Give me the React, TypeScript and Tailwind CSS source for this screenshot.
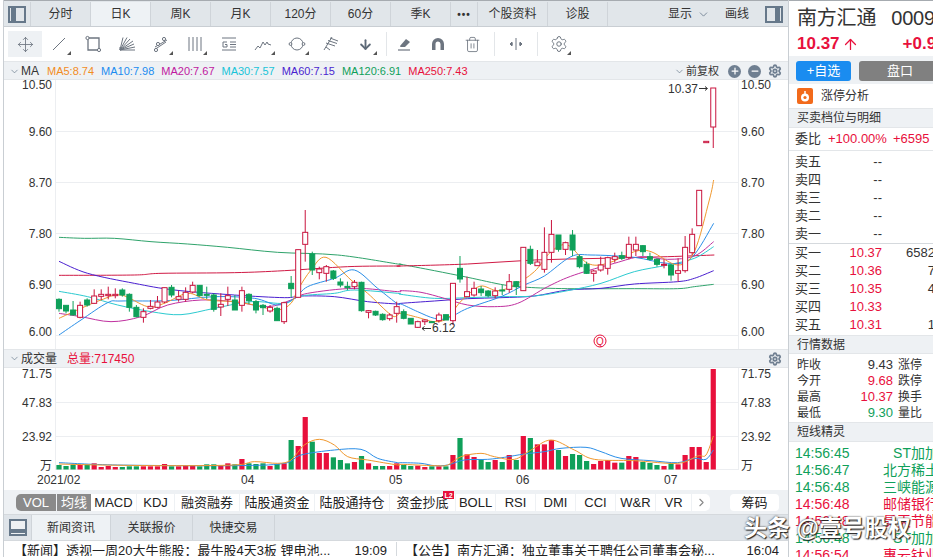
import { Move, Trash2, Settings, ChevronDown, ChevronRight, Plus, Minus, ArrowUp, ArrowDown } from 'lucide-react'
import type { ReactNode } from 'react'

const GREEN = '#0fa05a'
const RED = '#e8103c'
const CANDLE_RED = '#c9153f'

// hi, top, bottom, lo, up, volume top
type Candle = [number, number, number, number, number, number]

const candles: Candle[] = [
  [295, 298, 326, 335, 0, 345], [316, 316, 333, 340, 0, 348], [303, 330, 345, 345, 0, 344], [305, 316, 352, 355, 1, 345],
  [295, 300, 315, 320, 0, 344], [268, 288, 310, 312, 1, 340], [268, 283, 289, 300, 1, 351], [260, 283, 287, 298, 1, 348],
  [265, 283, 287, 295, 1, 351], [265, 270, 285, 290, 0, 351], [280, 283, 322, 335, 0, 349], [315, 322, 350, 352, 0, 349],
  [325, 335, 352, 368, 1, 349], [300, 319, 325, 328, 1, 349], [288, 306, 322, 325, 1, 349], [263, 263, 306, 310, 1, 342],
  [255, 262, 285, 292, 0, 349], [272, 290, 298, 305, 1, 349], [262, 277, 298, 305, 1, 347], [245, 256, 276, 280, 1, 347],
  [255, 256, 287, 290, 0, 349], [260, 283, 285, 297, 0, 343], [280, 285, 328, 335, 0, 343], [280, 313, 321, 348, 1, 347],
  [260, 287, 298, 318, 1, 340], [285, 300, 330, 330, 0, 343], [260, 272, 316, 335, 1, 327], [280, 283, 302, 312, 0, 340],
  [300, 305, 330, 340, 0, 342], [312, 316, 323, 345, 0, 340], [315, 322, 333, 338, 1, 348], [320, 325, 362, 363, 0, 342],
  [305, 308, 365, 372, 1, 340], [228, 250, 266, 292, 0, 270], [149, 149, 292, 292, 1, 288], [30, 97, 133, 185, 1, 201],
  [155, 162, 210, 225, 0, 275], [200, 207, 218, 238, 1, 309], [195, 200, 220, 245, 1, 309], [210, 213, 235, 240, 0, 322],
  [235, 246, 255, 262, 0, 330], [245, 259, 263, 270, 0, 340], [240, 247, 260, 268, 1, 336], [245, 247, 332, 335, 0, 318],
  [330, 332, 337, 355, 1, 340], [332, 334, 345, 348, 0, 348], [340, 343, 359, 362, 0, 348], [340, 345, 356, 362, 1, 348],
  [305, 320, 340, 368, 1, 340],
  [328, 335, 355, 358, 0, 345], [355, 355, 372, 372, 0, 348], [362, 365, 382, 384, 1, 347], [358, 360, 365, 375, 1, 351],
  [364, 365, 368, 368, 0, 349], [338, 345, 362, 368, 1, 349], [344, 344, 360, 360, 0, 349], [250, 250, 362, 375, 1, 315],
  [168, 205, 237, 248, 0, 264], [230, 275, 290, 292, 1, 313], [245, 265, 285, 290, 1, 321], [258, 267, 278, 288, 0, 328],
  [270, 273, 287, 292, 0, 336], [262, 273, 287, 295, 1, 330], [255, 270, 272, 285, 0, 336], [222, 245, 268, 278, 1, 315],
  [243, 245, 260, 285, 0, 330], [142, 142, 272, 272, 1, 258], [137, 148, 190, 195, 0, 264], [150, 186, 197, 197, 1, 283],
  [82, 157, 208, 218, 1, 283], [60, 103, 157, 188, 1, 270], [105, 105, 148, 155, 0, 300], [125, 128, 148, 165, 1, 318],
  [90, 105, 150, 168, 0, 312], [165, 170, 200, 205, 0, 315], [185, 193, 220, 222, 0, 333], [210, 213, 220, 245, 1, 342],
  [170, 195, 210, 215, 1, 333], [170, 173, 205, 224, 1, 330], [158, 170, 178, 188, 1, 338], [155, 167, 175, 180, 0, 338],
  [110, 133, 172, 178, 1, 318], [110, 133, 150, 168, 1, 321], [135, 137, 155, 168, 0, 336], [158, 170, 178, 182, 0, 339],
  [175, 178, 193, 200, 0, 345], [178, 193, 195, 205, 1, 348], [192, 195, 225, 242, 0, 340], [175, 212, 220, 245, 1, 343],
  [108, 142, 212, 218, 1, 315], [85, 103, 158, 165, 1, 291], [-29, -29, 77, 77, 1, 291], [-176, -176, -172, -172, 1, 336],
  [-336, -336, -219, -156, 1, 57],
]

const candleX = (i: number) => 58 + i * 7.035
const py = (v: number) => 200 + v / 3
const vy = (v: number) => 350 + v / 3

// catmull-rom through the sampled points, so the averages don't look kinked
const toPath = (left: number[][], right: number[][], fy: (v: number) => number) => {
  const pts = [...left.map(([x, y]) => [x / 3, fy(y)]), ...right.map(([x, y]) => [400 + x / 3, fy(y)])]
  let d = `M${pts[0][0]} ${pts[0][1]}`
  for (let i = 0; i < pts.length - 1; i++) {
    const a = pts[Math.max(i - 1, 0)]
    const b = pts[i]
    const c = pts[i + 1]
    const e = pts[Math.min(i + 2, pts.length - 1)]
    d += `C${b[0] + (c[0] - a[0]) / 6} ${b[1] + (c[1] - a[1]) / 6} ${c[0] - (e[0] - b[0]) / 6} ${c[1] - (e[1] - b[1]) / 6} ${c[0]} ${c[1]}`
  }
  return d
}

const maLines = [
  {
    color: '#2fa36b',
    left: [[174, 112], [250, 115], [340, 115], [450, 125], [560, 132], [680, 142], [830, 157], [1010, 165], [1190, 192]],
    right: [[0, 193], [100, 212], [200, 232], [310, 255], [380, 262], [500, 266], [700, 266], [830, 266], [880, 260], [938, 253]],
  },
  {
    color: '#d01a45',
    left: [[174, 226], [400, 225], [480, 220], [700, 218], [850, 212], [1040, 200], [1190, 198]],
    right: [[0, 198], [200, 192], [400, 180], [600, 175], [800, 170], [940, 165]],
  },
  {
    color: '#4a1fd0',
    left: [[174, 184], [260, 220], [400, 250], [520, 270], [700, 285], [850, 293], [900, 288], [1000, 290], [1100, 305], [1190, 312]],
    right: [[0, 310], [100, 303], [200, 296], [300, 293], [400, 288], [500, 270], [600, 265], [700, 252], [830, 245], [880, 235], [938, 212]],
  },
  {
    color: '#2ccad0',
    left: [[174, 274], [260, 290], [350, 315], [450, 335], [540, 344], [640, 325], [750, 305], [850, 310], [900, 288], [1000, 280], [1060, 270], [1190, 280]],
    right: [[0, 283], [100, 295], [200, 293], [300, 290], [400, 288], [500, 272], [600, 250], [700, 215], [800, 195], [880, 175], [938, 140]],
  },
  {
    color: '#c0309f',
    left: [[174, 340], [240, 350], [330, 365], [420, 350], [500, 315], [600, 300], [700, 305], [800, 320], [870, 300], [920, 280], [1060, 265], [1190, 275]],
    right: [[0, 272], [60, 277], [130, 295], [200, 315], [280, 320], [350, 310], [440, 260], [520, 225], [640, 190], [720, 170], [800, 178], [880, 168], [938, 125]],
  },
  {
    color: '#2b8fe8',
    left: [[174, 405], [240, 360], [320, 308], [360, 303], [500, 302], [640, 290], [760, 295], [830, 315], [880, 295], [920, 260], [1000, 235], [1060, 210], [1130, 265], [1190, 312]],
    right: [[0, 312], [50, 335], [100, 355], [140, 355], [200, 325], [300, 290], [370, 255], [430, 228], [510, 170], [570, 165], [700, 172], [800, 190], [870, 175], [938, 70]],
  },
  {
    color: '#f0982e',
    left: [[174, 355], [240, 325], [300, 300], [360, 285], [440, 320], [490, 310], [560, 280], [620, 300], [700, 305], [760, 315], [830, 330], [870, 310], [890, 270], [930, 210], [975, 172], [1050, 240], [1100, 280], [1170, 345], [1190, 345]],
    right: [[0, 340], [50, 352], [100, 365], [140, 355], [170, 315], [200, 285], [240, 258], [290, 272], [340, 255], [400, 215], [450, 155], [500, 135], [560, 190], [620, 190], [700, 155], [750, 155], [830, 195], [880, 155], [925, 0], [938, -60]],
  },
]

const volLines = [
  {
    color: '#2b8fe8',
    left: [[174, 338], [350, 345], [700, 347], [850, 340], [900, 315], [1000, 300], [1080, 298], [1130, 325], [1190, 338]],
    right: [[0, 338], [60, 340], [100, 347], [140, 345], [190, 330], [260, 328], [310, 322], [370, 312], [430, 305], [480, 295], [555, 292], [600, 305], [660, 325], [750, 332], [830, 338], [880, 325], [915, 328], [937, 300]],
  },
  {
    color: '#f0982e',
    left: [[174, 342], [300, 345], [500, 347], [700, 345], [760, 335], [830, 340], [870, 330], [910, 285], [955, 268], [1000, 285], [1040, 320], [1100, 330], [1190, 345]],
    right: [[0, 343], [100, 347], [140, 345], [180, 320], [240, 310], [280, 320], [340, 328], [390, 300], [450, 270], [520, 300], [580, 328], [700, 332], [830, 340], [890, 318], [915, 315], [937, 258]],
  },
]

const priceLabels = [
  { t: '10.50', y: 85 },
  { t: '9.60', y: 132 },
  { t: '8.70', y: 183 },
  { t: '7.80', y: 234 },
  { t: '6.90', y: 285 },
  { t: '6.00', y: 332 },
]
const volLabels = [
  { t: '71.75', y: 374 },
  { t: '47.83', y: 403 },
  { t: '23.92', y: 437 },
  { t: '万', y: 466 },
]
const maLegend = [
  { t: 'MA5:8.74', c: 'text-[#f28c1e]' },
  { t: 'MA10:7.98', c: 'text-[#1a8cf0]' },
  { t: 'MA20:7.67', c: 'text-[#c0189f]' },
  { t: 'MA30:7.57', c: 'text-[#18c4d8]' },
  { t: 'MA60:7.15', c: 'text-[#4a1fd0]' },
  { t: 'MA120:6.91', c: 'text-[#0fa05a]' },
  { t: 'MA250:7.43', c: 'text-[#e8103c]' },
]
const periodTabs = ['分时', '日K', '周K', '月K', '120分', '60分', '季K']
const indicators = [
  { t: 'MACD', w: 'w-[46px]' },
  { t: 'KDJ', w: 'w-[38px]' },
  { t: '融资融券', w: 'w-[65px]' },
  { t: '陆股通资金', w: 'w-[75px]' },
  { t: '陆股通持仓', w: 'w-[75px]' },
  { t: '资金抄底', w: 'w-[66px]', badge: true },
  { t: 'BOLL', w: 'w-[40px]' },
  { t: 'RSI', w: 'w-[40px]' },
  { t: 'DMI', w: 'w-[40px]' },
  { t: 'CCI', w: 'w-[40px]' },
  { t: 'W&R', w: 'w-[40px]' },
  { t: 'VR', w: 'w-[36px]' },
]
const sellRows = ['卖五', '卖四', '卖三', '卖二', '卖一']
const buyRows = [
  ['买一', '10.37', '6582'],
  ['买二', '10.36', '7'],
  ['买三', '10.35', '4'],
  ['买四', '10.33', ''],
  ['买五', '10.31', '1'],
]
const quoteRows = [
  { l: '昨收', v: '9.43', c: 'text-[#333]', r: '涨停' },
  { l: '今开', v: '9.68', c: 'text-[#e8103c]', r: '跌停' },
  { l: '最高', v: '10.37', c: 'text-[#e8103c]', r: '换手' },
  { l: '最低', v: '9.30', c: 'text-[#0fa05a]', r: '量比' },
]
const ticker = [
  { t: '14:56:45', n: 'ST加加', c: 'text-[#0fa05a]' },
  { t: '14:56:47', n: '北方稀土', c: 'text-[#0fa05a]' },
  { t: '14:56:48', n: '三峡能源', c: 'text-[#0fa05a]' },
  { t: '14:56:48', n: '邮储银行', c: 'text-[#e8103c]' },
  { t: '14:56:48', n: '昊天节能', c: 'text-[#e8103c]' },
  { t: '14:56:48', n: 'ST加加', c: 'text-[#0fa05a]' },
  { t: '14:56:54', n: '惠云钛业', c: 'text-[#e8103c]' },
]

function Tool({ children, corner, active }: { children: ReactNode; corner?: boolean; active?: boolean }) {
  return (
    <div className={`relative flex h-[26px] w-[34px] items-center justify-center text-[#6d7580] ${active ? 'bg-[#eef1f4]' : ''}`}>
      {children}
      {corner && <span className="absolute bottom-[2px] right-[5px] h-0 w-0 border-b-[4px] border-l-[4px] border-b-[#555] border-l-transparent" />}
    </div>
  )
}

function Glyph({ children }: { children: ReactNode }) {
  return (
    <svg width="18" height="18" viewBox="0 0 18 18" fill="none" stroke="currentColor" strokeWidth="1">
      {children}
    </svg>
  )
}

function Toolbar() {
  return (
    <div className="flex h-[34px] items-center bg-white pl-[4px]">
      <Tool active><Move size={17} strokeWidth={1.2} /></Tool>
      <Tool corner><Glyph><path d="M3 15 15 3" /></Glyph></Tool>
      <Tool>
        <Glyph>
          <path d="M4 3h11v12H4z" strokeWidth="1.3" />
          <circle cx="3.5" cy="3" r="1.6" fill="#fff" />
          <circle cx="15" cy="15" r="1.6" fill="#fff" />
        </Glyph>
      </Tool>
      <Tool>
        <Glyph>
          <path d="M2 15h15M2 15 17 12M2 15 16 9M2 15 15 6M2 15 12 4M2 15 9 2.500M2 15 5 2.500M2 12v3" />
        </Glyph>
      </Tool>
      <Tool corner>
        <Glyph>
          <path d="M3 12 15 5M2 15l12-8" />
          <circle cx="12" cy="4" r="1.6" fill="#fff" />
          <circle cx="6" cy="9" r="1.6" fill="#fff" />
          <circle cx="4" cy="15" r="1.6" fill="#fff" />
        </Glyph>
      </Tool>
      <Tool corner><Glyph><path d="M3 2v14M7 2v14M11 2v14M15 2v14" /></Glyph></Tool>
      <Tool>
        <Glyph>
          <path d="M2 3h14M2 15h14M10 7h6M10 9.500h6M10 12h6" />
          <path d="M7 7H3v5h4V9.500H5" />
        </Glyph>
      </Tool>
      <Tool corner><Glyph><path d="m1 15 3-4 2 2 3-6 2 3 2-3 1 2 3 1" /></Glyph></Tool>
      <Tool corner>
        <Glyph>
          <circle cx="9" cy="9" r="6" />
          <circle cx="2.500" cy="9" r="1.400" fill="#fff" />
          <circle cx="15.500" cy="9" r="1.400" fill="#fff" />
        </Glyph>
      </Tool>
      <Tool><Glyph><path d="M2 15 10 2M4 8l9 3M6 5.500l9 3M8 3l8 3M4 12l4 3" /></Glyph></Tool>
      <Tool corner><ArrowDown size={15} strokeWidth={3} className="text-[#5d6a78]" /></Tool>
      <span className="ml-[4px] h-[24px] w-px bg-[#e3e6e9]" />
      <Tool>
        <Glyph>
          <path d="M5 11 11 4l4 3-5 5H5.500z" fill="currentColor" stroke="none" />
          <path d="M3 15h12" strokeWidth="1.200" />
        </Glyph>
      </Tool>
      <Tool>
        <Glyph>
          <path d="M3 15V9a6 6 0 0 1 12 0v6h-3.500V9a2.500 2.500 0 0 0-5 0v6z" fill="currentColor" stroke="none" />
        </Glyph>
      </Tool>
      <Tool><Trash2 size={17} strokeWidth={1.2} /></Tool>
      <span className="ml-[5px] mr-[4px] h-[24px] w-px bg-[#e3e6e9]" />
      <Tool>
        <Glyph><path d="M9 3v12M3 9h3M12 9h3M5 7v4l-2-2zM13 7v4l2-2z" fill="currentColor" /></Glyph>
      </Tool>
      <span className="mx-[4px] h-[24px] w-px bg-[#e3e6e9]" />
      <Tool corner><Settings size={18} strokeWidth={1.3} /></Tool>
    </div>
  )
}

function RoundIcon({ children }: { children: ReactNode }) {
  return (
    <span className="flex h-[13px] w-[13px] items-center justify-center rounded-full bg-[#6f7f91] text-white">{children}</span>
  )
}

function PriceChart() {
  return (
    <svg className="block h-[269px] w-[784px]" viewBox="3 80 784 269">
      <g stroke="#eceef1">
        <line x1="54" x2="737" y1="131.500" y2="131.500" />
        <line x1="54" x2="737" y1="182.500" y2="182.500" />
        <line x1="54" x2="737" y1="233.500" y2="233.500" />
        <line x1="54" x2="737" y1="284.500" y2="284.500" />
        <line x1="54" x2="737" y1="335.500" y2="335.500" />
        <line x1="54.500" x2="54.500" y1="80" y2="349" />
        <line x1="737.500" x2="737.500" y1="80" y2="349" />
      </g>
      {maLines.map((l) => (
        <path key={l.color} d={toPath(l.left, l.right, py)} fill="none" stroke={l.color} strokeWidth="1" />
      ))}
      {candles.map(([hi, top, bot, lo, up], i) => {
        const x = candleX(i)
        const c = up ? CANDLE_RED : GREEN
        return (
          <g key={i}>
            <line x1={x} x2={x} y1={py(hi)} y2={py(lo)} stroke={c} strokeWidth="1" />
            <rect x={x - 2.500} y={py(top)} width="5" height={Math.max(py(bot) - py(top), 1)} fill={up ? '#fff' : GREEN} stroke={c} strokeWidth="1" />
          </g>
        )
      })}
      <g fontSize="12" fill="#333">
        {priceLabels.map((l) => (
          <text key={l.t} x="51" y={l.y + 4} textAnchor="end">{l.t}</text>
        ))}
        {priceLabels.map((l) => (
          <text key={l.t} x="740" y={l.y + 4}>{l.t}</text>
        ))}
        <text x="667" y="93">10.37</text>
        <text x="431" y="332">6.12</text>
      </g>
      <g fill="none" stroke="#333" strokeWidth="1">
        <path d="M698 88.500h8M704 86.500l2.500 2-2.500 2" />
        <path d="M421 328.500h9M423.500 326.500l-2.500 2 2.500 2" />
      </g>
      <circle cx="599" cy="341" r="6" fill="none" stroke="#e8103c" strokeWidth="1" />
      <text x="599" y="345" fontSize="10" fill="#e8103c" textAnchor="middle">Q</text>
    </svg>
  )
}

function VolumeChart() {
  return (
    <svg className="block h-[122px] w-[784px]" viewBox="3 368 784 122">
      <g stroke="#eceef1">
        <line x1="54" x2="737" y1="402.500" y2="402.500" />
        <line x1="54" x2="737" y1="436.500" y2="436.500" />
        <line x1="54" x2="737" y1="469.500" y2="469.500" />
        <line x1="54.500" x2="54.500" y1="368" y2="470" />
        <line x1="737.500" x2="737.500" y1="368" y2="470" />
      </g>
      {candles.map(([, , , , up, v], i) => (
        <rect key={i} x={candleX(i) - 2.600} y={vy(v)} width="5.200" height={469.500 - vy(v)} fill={up ? RED : GREEN} />
      ))}
      {volLines.map((l) => (
        <path key={l.color} d={toPath(l.left, l.right, vy)} fill="none" stroke={l.color} strokeWidth="1" />
      ))}
      <g fontSize="12" fill="#333">
        {volLabels.map((l) => (
          <text key={l.t} x="51" y={l.y + 4} textAnchor="end">{l.t}</text>
        ))}
        {volLabels.map((l) => (
          <text key={l.t} x="740" y={l.y + 4}>{l.t}</text>
        ))}
        <text x="36" y="484">2021/02</text>
        <text x="240" y="484">04</text>
        <text x="388" y="484">05</text>
        <text x="515" y="484">06</text>
        <text x="663" y="484">07</text>
      </g>
    </svg>
  )
}

function LeftPane() {
  return (
    <div className="ml-[3px] flex w-[785px] shrink-0 flex-col border-l border-[#c9ced3]">
      {/* period tabs */}
      <div className="flex h-[27px] items-stretch border-y border-t-[#a6abb0] border-b-[#c9ced3] bg-[#e1e6ea] pt-[1px] text-[12px] text-[#333]">
        <div className="flex w-[27px] items-center justify-center border-r border-[#cfd4d9]">
          <span className="flex h-[17px] w-[18px] border-2 border-[#66788a]">
            <span className="ml-[1px] h-full w-[5px] bg-[#66788a]" />
          </span>
        </div>
        {periodTabs.map((t, i) => (
          <div key={t} className={`flex w-[60px] items-center justify-center border-r border-[#cfd4d9] ${i === 1 ? 'bg-[#eef2f5]' : ''}`}>{t}</div>
        ))}
        <div className="flex w-[27px] items-center justify-center border-r border-[#cfd4d9] text-[10px] font-bold tracking-[1px]">•••</div>
        <div className="flex w-[70px] items-center justify-center border-r border-[#cfd4d9]">个股资料</div>
        <div className="flex w-[60px] items-center justify-center border-r border-[#cfd4d9]">诊股</div>
        <div className="ml-[60px] flex w-[52px] items-center gap-[5px]">显示 <ChevronDown size={13} strokeWidth={1.5} className="text-[#66788a]" /></div>
        <div className="ml-[5px] flex w-[40px] items-center">画线</div>
        <div className="flex items-center">
          <span className="flex h-[17px] w-[18px] justify-end border-2 border-[#66788a]">
            <span className="mr-[1px] h-full w-[5px] bg-[#66788a]" />
          </span>
        </div>
      </div>
      <Toolbar />
      {/* MA legend */}
      <div className="flex h-[19px] items-center border-y border-[#e3e6e9] bg-[#eef1f4] pl-[5px] pt-[1px] text-[11px]">
        <ChevronDown size={11} strokeWidth={1.5} className="text-[#66788a]" />
        <span className="ml-[1px] mr-[8px] text-[12px] text-[#333]">MA</span>
        <div className="flex gap-[7px]">
          {maLegend.map((m) => (
            <span key={m.t} className={m.c}>{m.t}</span>
          ))}
        </div>
        <div className="ml-auto flex items-center pr-[6px] text-[#333]">
          <ChevronDown size={11} strokeWidth={1.5} className="text-[#66788a]" />
          <span className="ml-[1px] mr-[9px]">前复权</span>
          <div className="flex items-center gap-[7px]">
            <RoundIcon><Plus size={10} strokeWidth={3} /></RoundIcon>
            <RoundIcon><Minus size={10} strokeWidth={3} /></RoundIcon>
            <Settings size={14} strokeWidth={3} className="text-[#6f7f91]" />
          </div>
        </div>
      </div>
      <PriceChart />
      {/* volume header */}
      <div className="flex h-[19px] items-center border-y border-[#e3e6e9] bg-[#eef1f4] pl-[5px] text-[12px] text-[#333]">
        <ChevronDown size={11} strokeWidth={1.5} className="text-[#66788a]" />
        <span className="ml-[1px]">成交量</span>
        <span className="ml-[10px] text-[#e8103c]">总量:717450</span>
        <Settings size={14} strokeWidth={3} className="ml-auto mr-[6px] text-[#6f7f91]" />
      </div>
      <VolumeChart />
      {/* indicator tabs */}
      <div className="flex h-[25px] items-center border-b border-[#d5d9dd] bg-[#eef1f4] pl-[12px] pt-[1px] text-[13px] text-[#222]">
        <div className="flex h-[17px] w-[40px] items-center justify-center rounded-l-[5px] bg-[#8a8a8a] text-white">VOL</div>
        <div className="ml-px flex h-[17px] w-[34px] items-center justify-center bg-[#8a8a8a] text-white">均线</div>
        {indicators.map((x) => (
          <div key={x.t} className={`relative flex h-[17px] items-center justify-center border-r border-[#eef1f4] bg-white ${x.w}`}>
            {x.t}
            {x.badge && (
              <span className="absolute right-[1px] top-[-3px] flex h-[8px] w-[11px] items-center justify-center bg-[#e8103c] text-[7px] font-bold leading-none text-white">L2</span>
            )}
          </div>
        ))}
        <div className="flex h-[17px] w-[18px] items-center justify-center rounded-r-[5px] bg-white">
          <ChevronRight size={13} className="text-[#888]" />
        </div>
        <div className="ml-[20px] flex h-[17px] w-[49px] items-center justify-center rounded-[4px] bg-white">筹码</div>
      </div>
      {/* news tabs */}
      <div className="flex h-[25px] items-stretch bg-[#dfe4e9] text-[12px] text-[#333]">
        <div className="flex w-[27px] items-center justify-center">
          <span className="flex h-[17px] w-[18px] items-end border-2 border-[#66788a] bg-[#eef1f4]">
            <span className="mb-[1px] h-[4px] w-full bg-[#66788a]" />
          </span>
        </div>
        <div className="flex w-[80px] items-center justify-center border-x border-[#cfd4d9] bg-[#eef2f5]">新闻资讯</div>
        <div className="flex w-[82px] items-center justify-center border-r border-[#cfd4d9]">关联报价</div>
        <div className="flex w-[82px] items-center justify-center border-r border-[#cfd4d9]">快捷交易</div>
      </div>
      {/* news rows */}
      <div className="flex h-[16px] items-start overflow-hidden border-t border-[#d5d9dd] bg-white pt-[1px] text-[13px] leading-[18px] text-[#222]">
        <div className="flex w-[392px] justify-between whitespace-nowrap pl-[10px] pr-[9px]">
          <span>【新闻】透视一周20大牛熊股：最牛股4天3板 锂电池...</span>
          <span>19:09</span>
        </div>
        <div className="flex flex-1 justify-between whitespace-nowrap border-l border-[#d5d9dd] pl-[8px] pr-[9px]">
          <span>【公告】南方汇通：独立董事关于聘任公司董事会秘...</span>
          <span>16:04</span>
        </div>
      </div>
    </div>
  )
}

function SectionHead({ children, h }: { children: ReactNode; h: string }) {
  return (
    <div className={`flex items-center border-y border-[#e3e6e9] bg-[#eef1f4] pl-[8px] text-[12px] text-[#333] ${h}`}>{children}</div>
  )
}

function RightPane() {
  return (
    <div className="w-[145px] shrink-0 overflow-hidden border-l border-[#c9ced3] bg-white text-[#333]">
      <div className="border-t border-[#a6abb0] pl-[8px]">
        <div className="flex h-[31px] w-[160px] items-center gap-[15px] whitespace-nowrap pt-[2px] text-[20px] tracking-[-0.2px]">
          <span>南方汇通</span>
          <span>000920</span>
        </div>
        <div className="flex h-[24px] w-[170px] items-center text-[17px] font-semibold text-[#e8103c]">
          <span>10.37</span>
          <ArrowUp size={17} strokeWidth={1.8} className="ml-[2px]" />
          <span className="ml-[44px]">+0.94</span>
        </div>
      </div>
      <div className="flex h-[28px] w-[170px] items-center gap-[8px] bg-[#eef1f4] pl-[7px] pt-[2px] text-[13px] text-white">
        <div className="flex h-[20px] w-[55px] items-center justify-center rounded-[3px] bg-[#1a8cf0]">+自选</div>
        <div className="flex h-[20px] w-[82px] items-center justify-center rounded-[3px] bg-[#808080]">盘口</div>
      </div>
      <div className="flex h-[24px] items-center gap-[8px] pl-[8px] text-[12px]">
        <span className="flex h-[16px] w-[16px] items-center justify-center rounded-[2px] bg-[#f26a1b] text-white">
          <svg width="10" height="11" viewBox="0 0 10 11"><circle cx="5" cy="6.500" r="4" fill="#fff" /><circle cx="5" cy="6.500" r="1.600" fill="#f26a1b" /><path d="M5 0v3" stroke="#fff" strokeWidth="1.500" /></svg>
        </span>
        涨停分析
      </div>
      <SectionHead h="h-[20px]">买卖档位与明细</SectionHead>
      <div className="flex h-[23px] w-[150px] items-center whitespace-nowrap border-b border-[#e3e6e9] pl-[6px] text-[13px]">
        <span className="w-[33px]">委比</span>
        <span className="text-[#e8103c]">+100.00%</span>
        <span className="ml-[6px] text-[#e8103c]">+6595</span>
      </div>
      <div className="border-b border-[#d5d9dd] pt-[2px]">
        {sellRows.map((s) => (
          <div key={s} className="flex h-[18px] items-center pl-[6px] text-[13px]">
            <span className="w-[40px]">{s}</span>
            <span className="w-[47px] text-right">--</span>
          </div>
        ))}
      </div>
      <div>
        {buyRows.map(([l, p, v]) => (
          <div key={l} className="flex h-[18px] w-[146px] items-center pl-[6px] text-[13px]">
            <span className="w-[40px]">{l}</span>
            <span className="w-[47px] text-right text-[#e8103c]">{p}</span>
            <span className="flex-1 text-right">{v}</span>
          </div>
        ))}
      </div>
      <SectionHead h="h-[19px] mt-[1px]">行情数据</SectionHead>
      <div className="pt-[3px] pb-[1px]">
        {quoteRows.map((q) => (
          <div key={q.l} className="flex h-[16px] items-center pl-[8px] text-[12px]">
            <span className="w-[28px]">{q.l}</span>
            <span className={`w-[68px] text-right text-[13px] ${q.c}`}>{q.v}</span>
            <span className="ml-[5px] whitespace-nowrap">{q.r}</span>
          </div>
        ))}
      </div>
      <SectionHead h="h-[20px]">短线精灵</SectionHead>
      <div className="w-[150px] pt-[3px] pl-[6px]">
        {ticker.map((x, i) => (
          <div key={i} className={`flex h-[17px] items-center justify-between whitespace-nowrap text-[14px] ${x.c}`}>
            <span>{x.t}</span>
            <span>{x.n}</span>
          </div>
        ))}
      </div>
    </div>
  )
}

export default function App() {
  return (
    <div className="relative flex h-[557px] w-[933px] overflow-hidden bg-white font-['Liberation_Sans','Noto_Sans_CJK_SC',sans-serif]">
      <LeftPane />
      <RightPane />
      {/* watermark */}
      <div className="absolute left-[744px] top-[510px] whitespace-nowrap text-[23px] font-bold leading-[36px] text-white [text-shadow:0_0_2px_#222,1px_1px_1px_#222]">
        头条 @壹号股权
      </div>
    </div>
  )
}
